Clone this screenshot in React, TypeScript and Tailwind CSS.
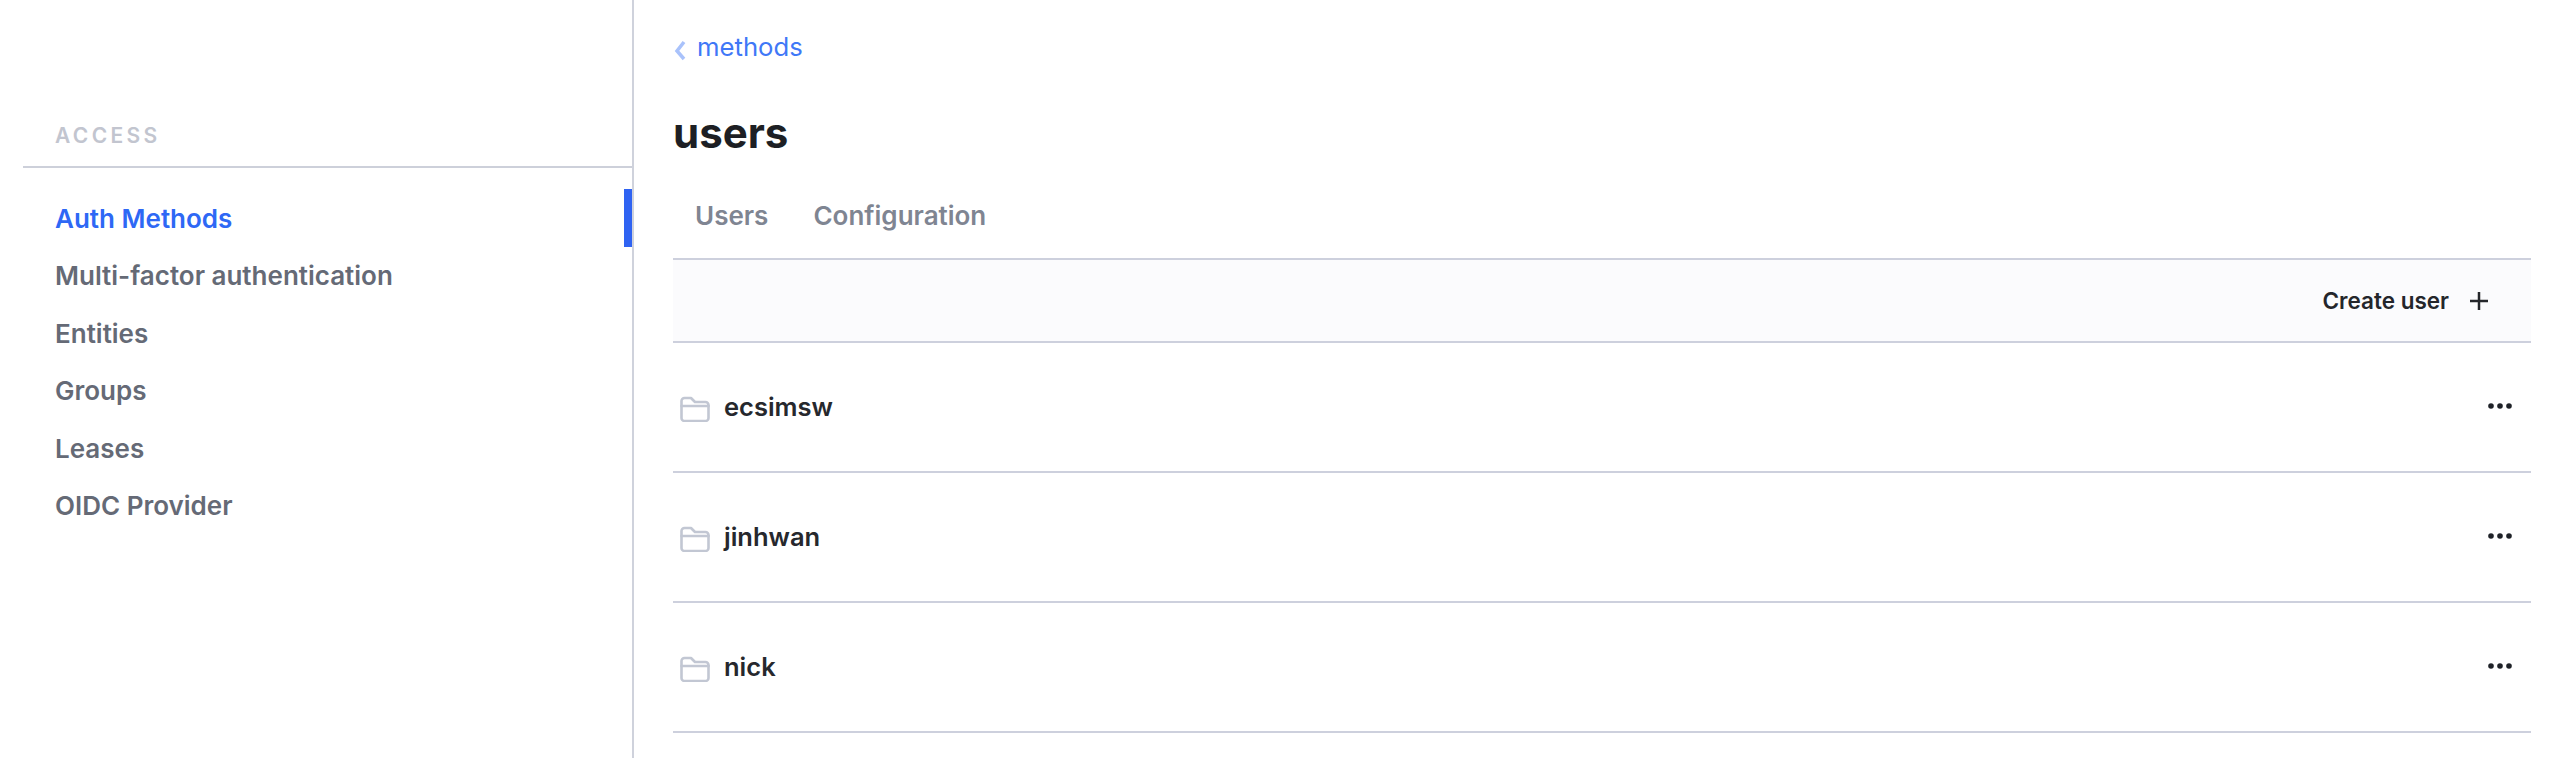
const font = { fontFamily: "Inter, 'Liberation Sans', sans-serif" };

const navItems = ["Multi-factor authentication", "Entities", "Groups", "Leases", "OIDC Provider"];
const users = ["ecsimsw", "jinhwan", "nick"];

function Folder() {
  return (
    <svg width="30" height="26" viewBox="0 0 30 26" fill="none" stroke="#c2c7d3" strokeWidth="2.600" strokeLinejoin="round" strokeLinecap="round">
      <path d="M1.5 5a3 3 0 0 1 3-3h6.500l4 4h10.500a3 3 0 0 1 3 3v13a3 3 0 0 1-3 3h-21a3 3 0 0 1-3-3z" />
      <path d="M1.500 10h27" />
    </svg>
  );
}

function Dots() {
  return (
    <svg width="24" height="6" viewBox="0 0 24 6" fill="#1f2228">
      <circle cx="3" cy="3" r="2.800" />
      <circle cx="12" cy="3" r="2.800" />
      <circle cx="21" cy="3" r="2.800" />
    </svg>
  );
}

export default function App() {
  return (
    <div className="flex h-[758px] w-[2576px] overflow-hidden bg-white" style={font}>
      <aside className="flex h-full w-[634px] shrink-0 flex-col border-r-2 border-[#cfd2dc] pl-[23px] pt-[123px]">
        <div className="flex h-[45px] items-start border-b-2 border-[#cdd0da] pl-[32px] text-[21px] leading-[26px] font-semibold tracking-[0.16em] text-[#c2c5cf]">
          ACCESS
        </div>
        <nav className="mt-[21px] flex flex-col">
          <div className="flex h-[58px] items-center justify-between text-[26px] font-semibold text-[#2e68f5]">
            <span className="pl-[32px]">Auth Methods</span>
            <span className="h-[58px] w-[8px] bg-[#2f63f2]" />
          </div>
          {navItems.map((n) => (
            <div key={n} className="flex h-[57.500px] items-center pl-[32px] text-[26px] font-semibold text-[#656a76]">
              {n}
            </div>
          ))}
        </nav>
      </aside>
      <main className="flex min-w-0 flex-1 flex-col pl-[39px] pr-[45px]">
        <div className="mt-[28px] flex h-[38px] items-center text-[25.700px] text-[#3f78f7]">
          <svg width="12" height="22" viewBox="0 0 12 22" fill="none" stroke="#a9c2fb" strokeWidth="3.500" className="ml-[1px] mt-[6px]">
            <path d="M10 3 L3 12 L10 20" />
          </svg>
          <span className="ml-[11px]">methods</span>
        </div>
        <h1 className="mt-[42px] text-[42px] leading-[50px] font-bold text-[#1d1f24]">users</h1>
        <div className="mt-[41px] flex h-[32px] items-center gap-[45px] pl-[22px] text-[26px] font-semibold text-[#7f8592]">
          <span>Users</span>
          <span>Configuration</span>
        </div>
        <div className="mt-[27px] flex h-[85px] shrink-0 items-center justify-end gap-[20px] border-y-2 border-[#cdd0dd] bg-[#fbfbfd] pr-[41px] text-[22.500px] font-semibold text-[#24262b]">
          <span>Create user</span>
          <svg width="20" height="20" viewBox="0 0 20 20" stroke="#24262b" strokeWidth="2.500" className="mr-[1px]">
            <path d="M10 1v18M1 10h18" />
          </svg>
        </div>
        {users.map((u) => (
          <div key={u} className="flex h-[130px] shrink-0 items-center border-b-2 border-[#cdd0dd] pl-[7px] pr-[19px]">
            <span className="mt-[3px] flex">
              <Folder />
            </span>
            <span className="ml-[14px] text-[25.500px] font-semibold text-[#26282d]">{u}</span>
            <span className="ml-auto mb-[3px] flex">
              <Dots />
            </span>
          </div>
        ))}
      </main>
    </div>
  );
}
